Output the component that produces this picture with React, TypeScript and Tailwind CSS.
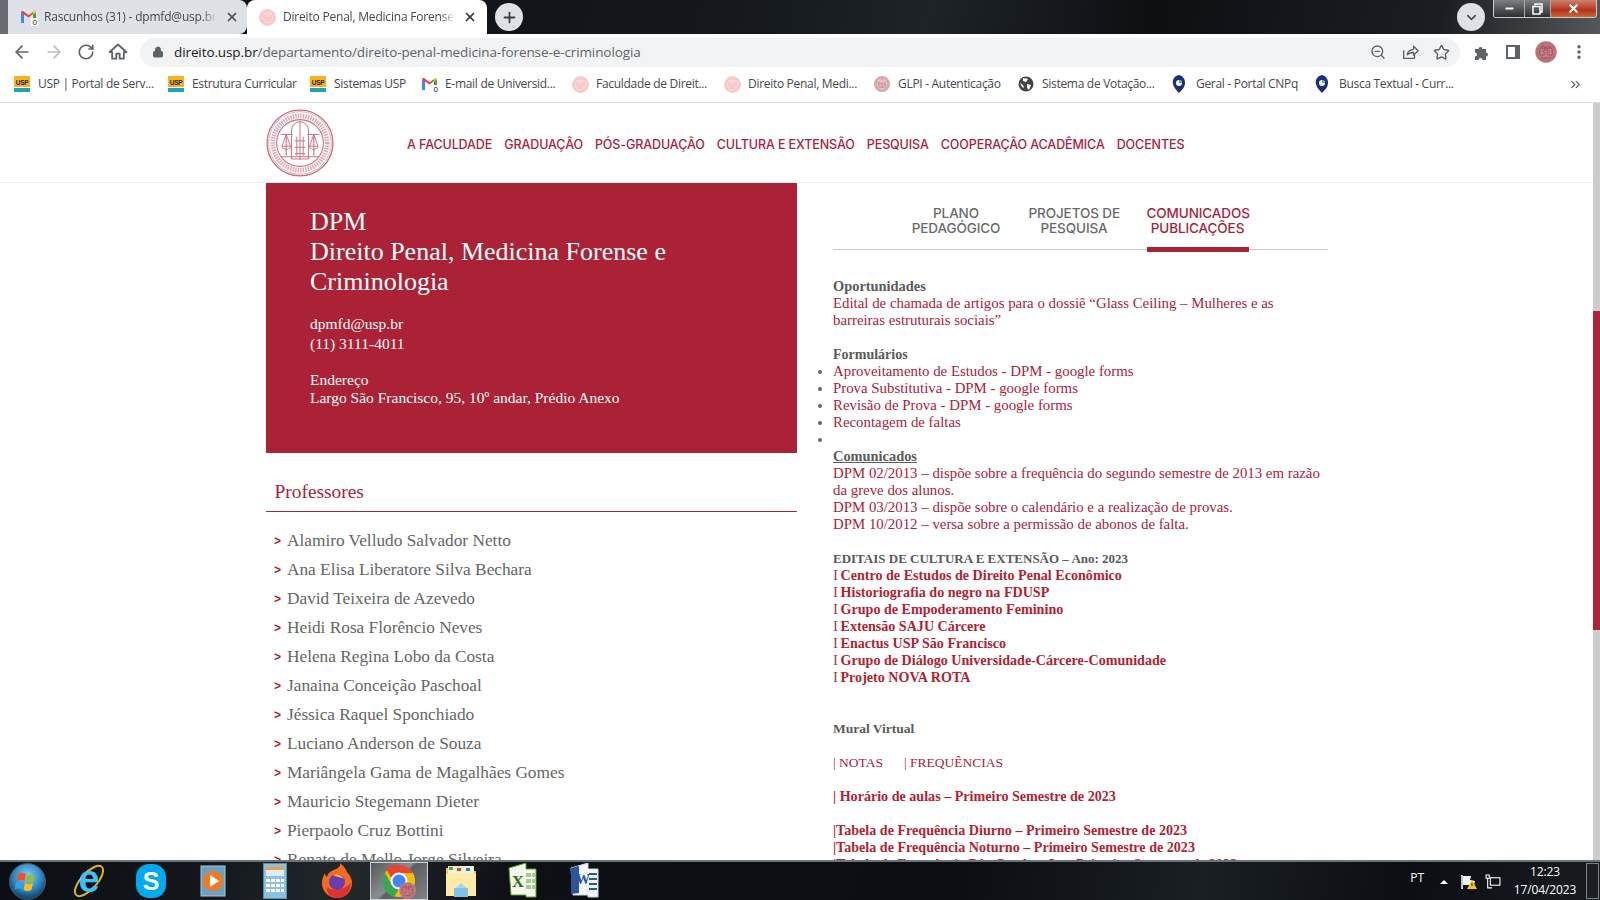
import type { ReactNode } from 'react'
import { ArrowLeft, ArrowRight, RotateCw, Lock, Plus, X, ChevronDown, ZoomOut, Star, MoreVertical, ChevronsRight, Minus } from 'lucide-react'

function Seal({ size, color = '#c9707f', fill = 'none' }: { size: number; color?: string; fill?: string }) {
  return (
    <svg width={size} height={size} viewBox="0 0 64 64" fill="none" stroke={color} className="shrink-0">
      <circle cx="32" cy="32" r="31" strokeWidth="1.2" fill={fill} />
      <circle cx="32" cy="32" r="29.500" strokeWidth="0.5" />
      <circle cx="32" cy="32" r="25.500" strokeWidth="4.400" strokeDasharray="1.400 1" opacity="0.6" />
      <circle cx="32" cy="32" r="22" strokeWidth="1" />
      <path d="M24 47V20a8 8 0 0 1 16 0v27z" strokeWidth="0.9" />
      <path d="M32 11v37M14 24h11M39 24h11M19 24l-4 11h8zM45 24l-4 11h8zM27 30h10M27 36h10M27 42h10M29 26v18M35 26v18" strokeWidth="0.9" />
      <path d="M15 35a4 3 0 0 0 8 0M41 35a4 3 0 0 0 8 0M19 24v20M45 24v20M14 45h36" strokeWidth="1" />
    </svg>
  )
}

function PaleSeal() {
  return <Seal size={17} color="#f0a8a8" fill="#fbdcdc" />
}

function UspIcon() {
  return (
    <svg width="16" height="16" viewBox="0 0 16 16" className="shrink-0">
      <rect width="16" height="11" fill="#f9b21d" />
      <rect y="11" width="16" height="1" fill="#fff" />
      <rect y="12" width="16" height="4" fill="#1ba6b5" />
      <text x="8" y="8.500" textAnchor="middle" fontSize="6.500" fontWeight="700" fontFamily="Liberation Sans" fill="#222">USP</text>
    </svg>
  )
}

function GmailIcon() {
  return (
    <svg width="18" height="17" viewBox="0 0 18 17" className="shrink-0">
      <path d="M1 14V3.500L4 5v9z" fill="#4285f4" />
      <path d="M13 14V5l3-1.500V14z" fill="#34a853" />
      <path d="M1 3.500C1 2 2.500 1.500 3.500 2.300L8.500 6.300 13 3 13 5 8.500 8.500 1 3.500z" fill="#ea4335" />
      <path d="M13 3l1.500-1C15.500 1.500 16 2.500 16 3.500L13 5z" fill="#fbbc04" />
      <rect x="11" y="9" width="7" height="8" fill="#fff" />
      <text x="14.500" y="16" textAnchor="middle" fontSize="8" fontFamily="Liberation Sans" fill="#111">0</text>
    </svg>
  )
}

function PinIcon() {
  return (
    <svg width="14" height="18" viewBox="0 0 14 18" className="shrink-0">
      <path d="M7 0C2 1 0 5 1 9c.5 3 3 6 6 9 3-3 6-6 6-10 0-4-2-7-6-8z" fill="#1d2f7a" />
      <circle cx="7" cy="8" r="3" fill="#fff" />
      <path d="M7 5a3 3 0 0 1 3 3H7z" fill="#4aa3df" />
    </svg>
  )
}

function GlobeIcon() {
  return (
    <svg width="16" height="16" viewBox="0 0 16 16" className="shrink-0">
      <circle cx="8" cy="8" r="7.500" fill="#44474a" />
      <path d="M5 2c2 1 4 0 5 1L8 6 5 5zM9 8l4 1-2 5-2-2zM2 7l3 2 1 3-2-1z" fill="#fff" />
    </svg>
  )
}

const bookmarks: { label: string; icon: ReactNode; w: string }[] = [
  { label: 'USP | Portal de Serv...', icon: <UspIcon />, w: 'w-[154px]' },
  { label: 'Estrutura Curricular', icon: <UspIcon />, w: 'w-[142px]' },
  { label: 'Sistemas USP', icon: <UspIcon />, w: 'w-[111px]' },
  { label: 'E-mail de Universid...', icon: <GmailIcon />, w: 'w-[151px]' },
  { label: 'Faculdade de Direit...', icon: <PaleSeal />, w: 'w-[152px]' },
  { label: 'Direito Penal, Medi...', icon: <PaleSeal />, w: 'w-[150px]' },
  { label: 'GLPI - Autenticação', icon: <Seal size={16} color="#a8545f" fill="#ecd2d2" />, w: 'w-[144px]' },
  { label: 'Sistema de Votação...', icon: <GlobeIcon />, w: 'w-[154px]' },
  { label: 'Geral - Portal CNPq', icon: <PinIcon />, w: 'w-[143px]' },
  { label: 'Busca Textual - Curr...', icon: <PinIcon />, w: 'w-[253px]' },
]

const navItems = ['A FACULDADE', 'GRADUAÇÃO', 'PÓS-GRADUAÇÃO', 'CULTURA E EXTENSÃO', 'PESQUISA', 'COOPERAÇÃO ACADÊMICA', 'DOCENTES']

const professors = [
  'Alamiro Velludo Salvador Netto',
  'Ana Elisa Liberatore Silva Bechara',
  'David Teixeira de Azevedo',
  'Heidi Rosa Florêncio Neves',
  'Helena Regina Lobo da Costa',
  'Janaina Conceição Paschoal',
  'Jéssica Raquel Sponchiado',
  'Luciano Anderson de Souza',
  'Mariângela Gama de Magalhães Gomes',
  'Mauricio Stegemann Dieter',
  'Pierpaolo Cruz Bottini',
  'Renato de Mello Jorge Silveira',
]

const editais = [
  'Centro de Estudos de Direito Penal Econômico',
  'Historiografia do negro na FDUSP',
  'Grupo de Empoderamento Feminino',
  'Extensão SAJU Cárcere',
  'Enactus USP São Francisco',
  'Grupo de Diálogo Universidade-Cárcere-Comunidade',
  'Projeto NOVA ROTA',
]

function TabStrip() {
  return (
    <div className="h-[34px] shrink-0 flex bg-[linear-gradient(100deg,#0b0d10_0%,#14181c_45%,#1e2327_58%,#0d1013_72%,#1a1e22_90%,#55585a_100%)] font-['Open_Sans',sans-serif] text-[12px] tracking-[-0.2px]">
      <div className="w-[8px] bg-[#6a6d6f]" />
      <div className="w-[239px] bg-[#dee1e6] rounded-lg rounded-l-none flex items-center pl-[12px] text-[#45494e]">
        <GmailIcon />
        <span className="ml-[6px] w-[172px] whitespace-nowrap overflow-hidden [mask-image:linear-gradient(90deg,#000_92%,transparent)]">Rascunhos (31) - dpmfd@usp.br</span>
        <X size={14} strokeWidth={3} className="ml-[9px] text-[#4a4d52]" />
      </div>
      <div className="w-[240px] bg-white rounded-t-lg flex items-center pl-[12px] text-[#45494e]">
        <PaleSeal />
        <span className="ml-[7px] w-[172px] whitespace-nowrap overflow-hidden [mask-image:linear-gradient(90deg,#000_92%,transparent)]">Direito Penal, Medicina Forense e Criminologia</span>
        <X size={14} strokeWidth={3} className="ml-[8px] text-[#33363a]" />
      </div>
      <div className="w-[28px] h-[28px] ml-[8px] mt-[3px] rounded-full bg-[#dee1e6] flex items-center justify-center text-[#3c4043]">
        <Plus size={17} strokeWidth={2.500} />
      </div>
      <div className="flex-1" />
      <div className="w-[28px] h-[28px] mt-[3px] rounded-full bg-[#dee1e6] flex items-center justify-center text-[#45494e]">
        <ChevronDown size={15} strokeWidth={2.500} />
      </div>
      <div className="ml-[8px] mr-[3px] w-[104px] h-[18px] flex border border-t-0 border-[#c8cccf] rounded-b-[3px] overflow-hidden">
        <div className="w-[30px] flex items-center justify-center bg-[linear-gradient(180deg,#7d8083,#2d3033)] text-white"><Minus size={11} strokeWidth={4} /></div>
        <div className="w-[27px] flex items-center justify-center border-x border-[#aaa] bg-[linear-gradient(180deg,#7d8083,#2d3033)]">
          <svg width="11" height="12" viewBox="0 0 11 12" fill="none" stroke="#fff" strokeWidth="1.500">
            <path d="M3 2.500V1h7v8H8" />
            <rect x="1" y="3.500" width="7" height="7.500" />
          </svg>
        </div>
        <div className="flex-1 flex items-center justify-center bg-[linear-gradient(180deg,#c9836f,#b8301a_60%,#c96a3a)] text-white"><X size={13} strokeWidth={4} /></div>
      </div>
    </div>
  )
}

function Toolbar() {
  return (
    <div className="h-[34px] shrink-0 pt-[2px] bg-white flex items-center text-[#5f6368]">
      <div className="w-[140px] flex items-center pl-[12px] gap-[12px]">
        <ArrowLeft size={20} strokeWidth={2} />
        <ArrowRight size={20} strokeWidth={2} className="text-[#babcbe]" />
        <RotateCw size={18} strokeWidth={2.200} className="ml-[1px]" />
        <svg width="20" height="20" viewBox="0 0 24 24" fill="none" stroke="currentColor" strokeWidth="2.200" strokeLinejoin="round" className="ml-[1px]">
          <path d="M10 20v-6h4v6h5v-8h3L12 3 2 12h3v8z" />
        </svg>
      </div>
      <div className="w-[1320px] h-[29px] rounded-full bg-[#f1f3f4] flex items-center pl-[12px] pr-[10px] font-['Open_Sans',sans-serif] text-[13.500px] tracking-[-0.1px]">
        <Lock size={12} fill="#5f6368" className="mr-[10px]" />
        <span className="text-[#202124]">direito.usp.br</span>
        <span>/departamento/direito-penal-medicina-forense-e-criminologia</span>
        <div className="flex-1" />
        <ZoomOut size={16} className="mr-[15px]" />
        <svg width="18" height="18" viewBox="0 0 20 20" fill="none" stroke="currentColor" strokeWidth="1.500" strokeLinejoin="round" className="mr-[14px]">
          <path d="M3 8v9h12v-4" />
          <path d="M7 13c0-3 3-6 7-6V3.500l5 5-5 5V10.500c-3 0-5 .5-7 2.500z" />
        </svg>
        <Star size={17} strokeWidth={2} />
      </div>
      <div className="flex-1 flex items-center pl-[14px]">
        <svg width="16" height="16" viewBox="0 0 16 16" fill="#5f6368"><path d="M1 5h3.500a2 2 0 1 1 4 0H12v3.500a2 2 0 1 1 0 4V16H8.500a2 2 0 1 0-4 0H1v-3.500a2 2 0 1 0 0-4z" /></svg>
        <div className="ml-[16px] w-[14px] h-[14px] border-2 border-r-[5px] border-[#5f6368]" />
        <div className="ml-[15px]"><Seal size={22} color="#e6bcbc" fill="#a9525c" /></div>
        <MoreVertical size={18} strokeWidth={2.600} className="ml-[13px]" />
      </div>
    </div>
  )
}

function Bookmarks() {
  return (
    <div className="h-[35px] shrink-0 pb-[2px] bg-white border-b border-[#dcdcdc] flex items-center pl-[14px] font-['Open_Sans',sans-serif] text-[12px] tracking-[-0.3px] text-[#45494e]">
      {bookmarks.map((b, i) => (
        <div key={i} className={`${b.w} shrink-0 flex items-center whitespace-nowrap`}>
          <span className="w-[24px] shrink-0 flex">{b.icon}</span>
          <span>{b.label}</span>
        </div>
      ))}
      <ChevronsRight size={15} className="text-[#5f6368]" />
    </div>
  )
}

function Header() {
  return (
    <header className="h-[80px] shrink-0 border-b border-[#eeeeee] flex items-center pl-[266px]">
      <Seal size={68} />
      <nav className="ml-[73px] mt-[5px] flex gap-[12px] font-['Inter',sans-serif] text-[12.500px] font-medium tracking-[-0.1px] text-[#a9233a] whitespace-nowrap">
        {navItems.map(item => (
          <span key={item}>{item}</span>
        ))}
      </nav>
    </header>
  )
}

function LeftColumn() {
  return (
    <div className="w-[531px] shrink-0">
      <section className="h-[270px] bg-[#ab2236] pl-[44px] pt-[24px] text-white">
        <h1 className="text-[26px] leading-[30px]">
          DPM<br />Direito Penal, Medicina Forense e<br />Criminologia
        </h1>
        <p className="mt-[17px] text-[15.500px] leading-[20px]">
          dpmfd@usp.br<br />(11) 3111-4011
        </p>
        <p className="mt-[17px] text-[15.500px] leading-[18px]">
          Endereço<br />Largo São Francisco, 95, 10º andar, Prédio Anexo
        </p>
      </section>
      <h2 className="mt-[25px] h-[34px] border-b border-[#ab2236] pl-[8.500px] text-[19.400px] leading-[28px] text-[#a9233a]">Professores</h2>
      <ul className="mt-[14px]">
        {professors.map(name => (
          <li key={name} className="pl-[8px] flex h-[29px] items-center text-[17.300px] text-[#666666] whitespace-nowrap">
            <span className="w-[13px] font-['Liberation_Sans',sans-serif] text-[12px] font-bold text-[#ab2236]">&gt;</span>
            {name}
          </li>
        ))}
      </ul>
    </div>
  )
}

function Blank() {
  return <div className="h-[17px]" />
}

function RightColumn() {
  const link = 'text-[#a9233a]'
  const head = 'text-[14.400px] font-bold text-[#5a5a5a]'
  const strong = 'text-[14.100px] font-bold text-[#b21f33]'
  return (
    <div className="w-[495px] shrink-0">
      <div className="relative h-[67px] border-b border-[#cccccc] flex justify-center gap-[27px] pt-[23px] pr-[2px] font-['Inter',sans-serif] text-[13.500px] leading-[15px] font-medium tracking-[-0.1px] text-center text-[#6a6a6a] whitespace-nowrap">
        <div className="w-[91px]">PLANO<br />PEDAGÓGICO</div>
        <div className="w-[91px]">PROJETOS DE<br />PESQUISA</div>
        <div className="relative w-[102px] text-[#a9233a]">
          COMUNICADOS<br />PUBLICAÇÕES
          <div className="absolute left-0 right-0 top-[41px] h-[5px] bg-[#ab2236]" />
        </div>
      </div>
      <div className="mt-[28px] text-[14.850px] leading-[17px] whitespace-nowrap">
        <div className={head}>Oportunidades</div>
        <div className={link}>Edital de chamada de artigos para o dossiê “Glass Ceiling – Mulheres e as<br />barreiras estruturais sociais”</div>
        <Blank />
        <div className={`${head} text-[14px]`}>Formulários</div>
        <ul className={`list-disc list-outside marker:text-[#666666] ${link}`}>
          <li>Aproveitamento de Estudos - DPM - google forms</li>
          <li>Prova Substitutiva - DPM - google forms</li>
          <li>Revisão de Prova - DPM - google forms</li>
          <li>Recontagem de faltas</li>
          <li>&nbsp;</li>
        </ul>
        <div className={`${head} underline`}>Comunicados</div>
        <div className={link}>
          DPM 02/2013 – dispõe sobre a frequência do segundo semestre de 2013 em razão<br />
          da greve dos alunos.<br />
          DPM 03/2013 – dispõe sobre o calendário e a realização de provas.<br />
          DPM 10/2012 – versa sobre a permissão de abonos de falta.
        </div>
        <Blank />
        <div className="text-[13px] font-bold text-[#5a5a5a]">EDITAIS DE CULTURA E EXTENSÃO – Ano: 2023</div>
        {editais.map(e => (
          <div key={e} className="text-[#b21f33]">
            <span className="inline-block w-[7.500px] text-[#8a4a52]">I</span>
            <span className={strong}>{e}</span>
          </div>
        ))}
        <Blank />
        <Blank />
        <div className="text-[13.500px] font-bold text-[#5a5a5a]">Mural Virtual</div>
        <Blank />
        <div className={`text-[13.500px] ${link}`}>| NOTAS<span className="ml-[21px]">| FREQUÊNCIAS</span></div>
        <Blank />
        <div className={strong}>| Horário de aulas – Primeiro Semestre de 2023</div>
        <Blank />
        <div className={strong}>|Tabela de Frequência Diurno – Primeiro Semestre de 2023</div>
        <div className={strong}>|Tabela de Frequência Noturno – Primeiro Semestre de 2023</div>
        <div className={strong}>|Tabela de Frequência Pós-Graduação – Primeiro Semestre de 2023</div>
      </div>
    </div>
  )
}

function Page() {
  return (
    <div className="flex-1 min-h-0 flex bg-white">
      <main className="flex-1 min-w-0 flex flex-col overflow-hidden font-['Liberation_Serif',serif]">
        <Header />
        <div className="flex gap-[36px] pl-[266px]">
          <LeftColumn />
          <RightColumn />
        </div>
      </main>
      <div className="w-[7px] shrink-0 bg-[#cdcdcd] pt-[208px]">
        <div className="h-[319px] bg-[#ac2338]" />
      </div>
    </div>
  )
}

const slot = 'w-[62px] shrink-0 flex items-center justify-center'

function Taskbar() {
  return (
    <div className="h-[40px] shrink-0 flex items-center border-t-2 border-[#6d7479] bg-[linear-gradient(100deg,#0b0e12_0%,#12161a_12%,#23282c_22%,#0d1014_32%,#0b0e12_60%,#1a1f23_75%,#0b0e12_88%,#181c20_100%)] text-white font-['Open_Sans',sans-serif]">
      <div className="w-[58px] shrink-0 pl-[9px] flex items-center">
        <svg width="37" height="37" viewBox="0 0 37 37">
          <defs>
            <radialGradient id="orb" cx="50%" cy="35%" r="65%">
              <stop offset="0" stopColor="#8fcdf0" />
              <stop offset="0.6" stopColor="#2a86c4" />
              <stop offset="1" stopColor="#0f3a5c" />
            </radialGradient>
          </defs>
          <circle cx="18.500" cy="18.500" r="18" fill="url(#orb)" stroke="#4a555e" />
          <path d="M9 11c3-1.500 5-1.500 8 0l-1.500 7c-3-1.500-5-1.500-8 0z" fill="#f0512c" />
          <path d="M18 11.500c3 1.500 5 1.500 8 0l-1.500 7c-3 1.500-5 1.500-8 0z" fill="#8bbf3f" />
          <path d="M7 19.500c3-1.500 5-1.500 8 0l-1.500 7c-3-1.500-5-1.500-8 0z" fill="#33a0e8" />
          <path d="M16 20c3 1.500 5 1.500 8 0l-1.500 7c-3 1.500-5 1.500-8 0z" fill="#fbbc1c" />
        </svg>
      </div>
      <div className={slot}>
        <svg width="34" height="36" viewBox="0 0 34 36">
          <ellipse cx="17" cy="18" rx="19" ry="8" transform="rotate(-48 17 18)" fill="none" stroke="#e2b020" strokeWidth="2" />
          <text x="17" y="29" textAnchor="middle" fontSize="38" fontWeight="700" fontFamily="Liberation Sans" fill="#3cc0f5">e</text>
        </svg>
      </div>
      <div className={slot}>
        <svg width="32" height="36" viewBox="0 0 32 36">
          <rect x="1" y="1" width="30" height="34" rx="13" fill="#00aaf0" />
          <text x="16" y="27" textAnchor="middle" fontSize="25" fontWeight="700" fontFamily="Liberation Sans" fill="#fff">S</text>
        </svg>
      </div>
      <div className={slot}>
        <svg width="26" height="32" viewBox="0 0 26 32">
          <rect x="1" y="1" width="24" height="30" fill="#6f9fc0" stroke="#a8c8dc" />
          <circle cx="13" cy="16" r="10" fill="#f47a20" />
          <path d="M10 10l9 6-9 6z" fill="#fff" />
        </svg>
      </div>
      <div className={slot}>
        <svg width="24" height="36" viewBox="0 0 24 36">
          <rect x="0.500" y="0.500" width="23" height="35" fill="#8ac0e0" stroke="#5b8fb2" />
          <rect x="3" y="4" width="18" height="9" fill="#dcecf6" />
          <rect x="3" y="4" width="18" height="3" fill="#f0a040" />
          <g fill="#fff">
            <rect x="3" y="16" width="4" height="3" /><rect x="8" y="16" width="4" height="3" /><rect x="13" y="16" width="4" height="3" /><rect x="18" y="16" width="3" height="3" />
            <rect x="3" y="21" width="4" height="3" /><rect x="8" y="21" width="4" height="3" /><rect x="13" y="21" width="4" height="3" /><rect x="18" y="21" width="3" height="3" />
            <rect x="3" y="26" width="4" height="3" /><rect x="8" y="26" width="4" height="3" /><rect x="13" y="26" width="4" height="3" /><rect x="18" y="26" width="3" height="3" />
          </g>
        </svg>
      </div>
      <div className={slot}>
        <svg width="32" height="36" viewBox="0 0 32 36">
          <path d="M16 35C7 35 1 28 1 20c0-5 2-8 3-10 0 2 1 3 2 4 1-5 6-7 9-8 5-2 4-5 4-6 5 4 6 7 7 9 3 3 5 7 5 11 0 9-7 15-15 15z" fill="#f26b21" />
          <path d="M16 35C9 35 5 29 6 24c6 5 16 4 24-4 0 9-6 15-14 15z" fill="#e0312e" />
          <circle cx="16" cy="19" r="8" fill="#6a3bb0" />
          <path d="M12 12c4-2 9 0 11 4-3-2-8-2-11-4z" fill="#fbb52b" />
        </svg>
      </div>
      <div className={slot}>
        <div className="relative w-[58px] h-[38px] border border-[#cfd2d4] bg-[linear-gradient(135deg,#55585b_0%,#8c8f91_45%,#5d6062_50%,#808386_100%)] flex items-center justify-center">
          <svg width="32" height="32" viewBox="0 0 32 32">
            <circle cx="16" cy="16" r="16" fill="#fbbc05" />
            <path d="M16 0a16 16 0 0 1 14 8H16a8 8 0 0 0-7.500 5L3 4a16 16 0 0 1 13-4z" fill="#ea4335" />
            <path d="M2 8l7 12a8 8 0 0 0 7 4l-5 8A16 16 0 0 1 2 8z" fill="#34a853" />
            <circle cx="16" cy="16" r="7.500" fill="#4285f4" stroke="#fff" strokeWidth="2" />
          </svg>
          <div className="absolute left-[28px] top-[19px]"><Seal size={17} color="#e8c0c0" fill="#a9525c" /></div>
        </div>
      </div>
      <div className={slot}>
        <svg width="32" height="34" viewBox="0 0 32 34">
          <path d="M1 4h11l3 3h16v25H1z" fill="#e8c872" />
          <rect x="3" y="2" width="26" height="8" fill="#f6f0d0" />
          <rect x="4" y="3" width="4" height="3" fill="#3fae49" />
          <rect x="12" y="4" width="4" height="3" fill="#d9432f" />
          <rect x="21" y="4" width="4" height="3" fill="#2a7fd0" />
          <path d="M1 10h30v22H1z" fill="#fbeaa8" />
          <path d="M9 24h14v9H9z" fill="#7ec4e8" />
          <path d="M11 24l5-5 5 5z" fill="#a4d8f2" />
        </svg>
      </div>
      <div className={slot}>
        <svg width="30" height="36" viewBox="0 0 30 36">
          <path d="M1 5L18 0v6h10v28H18v-2L3 32z" fill="#f2f7ee" stroke="#5aa020" />
          <g fill="#a8c990"><rect x="18" y="10" width="5" height="4" /><rect x="18" y="16" width="5" height="4" /><rect x="18" y="22" width="5" height="4" /><rect x="24" y="10" width="4" height="4" /><rect x="24" y="16" width="4" height="4" /><rect x="24" y="22" width="4" height="4" /></g>
          <text x="10" y="24" textAnchor="middle" fontSize="17" fontWeight="700" fontFamily="Liberation Serif" fill="#2f6e1c">X</text>
        </svg>
      </div>
      <div className={slot}>
        <svg width="30" height="36" viewBox="0 0 30 36">
          <path d="M1 5L18 0v6h10v28H18v-2L3 32z" fill="#f3f6fb" stroke="#c8d4e8" />
          <path d="M1 5l8-2v27l-8 1z" fill="#2b579a" />
          <g fill="#2b579a"><rect x="19" y="10" width="8" height="2" /><rect x="19" y="15" width="8" height="2" /><rect x="19" y="20" width="8" height="2" /><rect x="19" y="25" width="8" height="2" /></g>
          <text x="13" y="21" textAnchor="middle" fontSize="14" fontWeight="700" fontFamily="Liberation Serif" fill="#2b579a">W</text>
        </svg>
      </div>
      <div className="flex-1" />
      <span className="text-[12px] -mt-[6px]">PT</span>
      <div className="ml-[16px] w-0 h-0 border-x-[4px] border-x-transparent border-b-[4px] border-b-white mt-[2px]" />
      <svg width="16" height="16" viewBox="0 0 16 16" className="ml-[13px] mt-[2px]">
        <path d="M1 1v14" stroke="#fff" strokeWidth="1.500" />
        <path d="M2 2h8l-1 4 5 1-1 4H2z" fill="#f2f2f2" />
        <path d="M11 6l5 9H6z" fill="#f5c518" />
        <rect x="10.500" y="9" width="1" height="3" fill="#222" />
      </svg>
      <svg width="16" height="16" viewBox="0 0 15 15" fill="none" stroke="#fff" className="ml-[8px] mt-[2px]">
        <path d="M1 1h3v3H1zM2.500 4v9h4" />
        <rect x="5" y="3.500" width="9" height="7" />
      </svg>
      <div className="ml-[3px] w-[82px] text-center text-[12px] tracking-[-0.1px] leading-[18px]">
        <div>12:23</div>
        <div>17/04/2023</div>
      </div>
      <div className="mr-[1px] w-[13px] h-[36px] border border-[#7d8286] bg-[#1c2024]" />
    </div>
  )
}

export default function App() {
  return (
    <div className="h-screen w-full flex flex-col overflow-hidden">
      <TabStrip />
      <Toolbar />
      <Bookmarks />
      <Page />
      <Taskbar />
    </div>
  )
}
